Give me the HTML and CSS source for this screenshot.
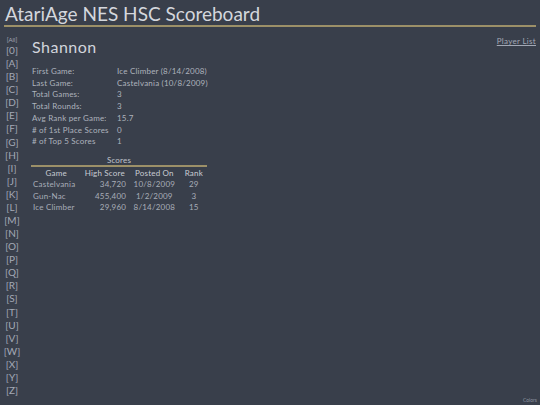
FILE: index.html
```html
<!DOCTYPE html>
<html>
<head>
<meta charset="utf-8">
<link rel="stylesheet" href="styles.css">
</head>
<body>
<h1 class="title">AtariAge NES HSC Scoreboard</h1>
<div class="main">
  <nav class="letters">
    <a class="all">[All]</a>
    <a>[0]</a><a>[A]</a><a>[B]</a><a>[C]</a><a>[D]</a><a>[E]</a><a>[F]</a><a>[G]</a><a>[H]</a><a>[I]</a><a>[J]</a><a>[K]</a><a>[L]</a><a>[M]</a><a>[N]</a><a>[O]</a><a>[P]</a><a>[Q]</a><a>[R]</a><a>[S]</a><a>[T]</a><a>[U]</a><a>[V]</a><a>[W]</a><a>[X]</a><a>[Y]</a><a>[Z]</a>
  </nav>
  <div class="content">
    <div class="head">
      <h2 class="player">Shannon</h2>
      <a class="plist">Player List</a>
    </div>
    <table class="info">
      <tr><td class="lbl">First Game:</td><td>Ice Climber (8/14/2008)</td></tr>
      <tr><td class="lbl">Last Game:</td><td>Castelvania (10/8/2009)</td></tr>
      <tr><td class="lbl">Total Games:</td><td>3</td></tr>
      <tr><td class="lbl">Total Rounds:</td><td>3</td></tr>
      <tr><td class="lbl">Avg Rank per Game:</td><td>15.7</td></tr>
      <tr><td class="lbl"># of 1st Place Scores</td><td>0</td></tr>
      <tr><td class="lbl"># of Top 5 Scores</td><td>1</td></tr>
    </table>
    <table class="scores">
      <caption>Scores</caption>
      <thead>
        <tr><th class="c-game">Game</th><th class="c-hs">High Score</th><th class="c-po">Posted On</th><th class="c-rk">Rank</th></tr>
      </thead>
      <tbody>
        <tr><td class="g">Castelvania</td><td class="n">34,720</td><td class="d">10/8/2009</td><td class="d">29</td></tr>
        <tr><td class="g">Gun-Nac</td><td class="n">455,400</td><td class="d">1/2/2009</td><td class="d">3</td></tr>
        <tr><td class="g">Ice Climber</td><td class="n">29,960</td><td class="d">8/14/2008</td><td class="d">15</td></tr>
      </tbody>
    </table>
  </div>
</div>
<div class="colors">Colors</div>
</body>
</html>
```
FILE: styles.css
```css
html, body {
  margin: 0;
  padding: 0;
  background: #393f4b;
  height: 100%;
}
body {
  font-family: "Lato", "DejaVu Sans", sans-serif;
  color: #c4c8d0;
  position: relative;
  overflow: hidden;
}
.title {
  margin: 0 4px;
  padding: 3px 0 0 1px;
  height: 22px;
  font-size: 19px;
  line-height: 22px;
  font-weight: normal;
  color: #d4d7dd;
  border-bottom: 2px solid #9c9068;
}
.main {
  display: flex;
}
.letters {
  width: 24px;
  display: flex;
  flex-direction: column;
  align-items: center;
  padding-top: 9px;
}
.letters a {
  font-size: 10px;
  line-height: 13.08px;
  color: #a4a9b6;
}
.letters a.all {
  font-size: 6px;
  line-height: 8px;
}
.content {
  flex: 1;
  padding-left: 7px;
  padding-right: 4px;
}
.head {
  display: flex;
  justify-content: space-between;
  align-items: flex-start;
  margin-top: 9px;
}
.player {
  margin: 0;
  font-size: 16px;
  line-height: 22px;
  font-weight: normal;
  color: #d2d5dc;
  letter-spacing: 0.5px;
  padding-left: 1px;
}
.plist {
  font-size: 8px;
  letter-spacing: 0.3px;
  color: #a2a8b5;
  text-decoration: underline;
}
.info {
  border-collapse: collapse;
  margin-top: 8px;
  margin-left: 1px;
  font-size: 8px;
  letter-spacing: 0.2px;
  color: #aeb3bd;
}
.info td {
  padding: 0;
  height: 11.7px;
  line-height: 11.7px;
  white-space: nowrap;
}
.info td.lbl {
  width: 85px;
}
.scores {
  border-collapse: collapse;
  width: 176px;
  margin-top: 8px;
  font-size: 8px;
  letter-spacing: 0.2px;
  color: #a8adb8;
}
.scores caption {
  line-height: 9px;
  color: #c0c4cc;
  border-bottom: 2px solid #9c9068;
}
.scores th {
  font-weight: normal;
  color: #c8ccd3;
  padding: 0;
  height: 12px;
  line-height: 12px;
  text-align: center;
}
.scores td {
  padding: 0;
  height: 11.7px;
  line-height: 11.7px;
  white-space: nowrap;
}
.scores td.g { padding-left: 2px; }
.scores td.n { text-align: right; padding-right: 2px; }
.scores td.d { text-align: center; }
.c-game { width: 50px; }
.c-hs { width: 46px; }
.c-po { width: 52px; }
.c-rk { width: 26px; }
.colors {
  position: absolute;
  right: 3px;
  bottom: 2px;
  font-size: 5px;
  color: #8d93a0;
}
```
